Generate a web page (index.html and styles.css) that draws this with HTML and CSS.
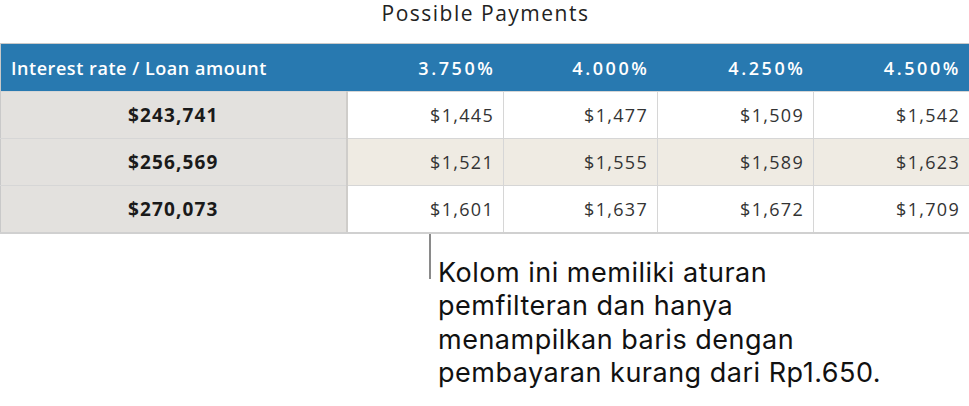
FILE: index.html
```
<!DOCTYPE html>
<html>
<head>
<meta charset="utf-8">
<link rel="stylesheet" href="styles.css">
</head>
<body>
<div class="page">
  <div class="title">Possible Payments</div>
  <table class="grid">
    <colgroup>
      <col class="c1"><col class="c2"><col class="c3"><col class="c4"><col class="c5">
    </colgroup>
    <thead>
      <tr>
        <th class="label">Interest rate / Loan amount</th>
        <th>3.750%</th>
        <th>4.000%</th>
        <th>4.250%</th>
        <th>4.500%</th>
      </tr>
    </thead>
    <tbody>
      <tr>
        <td class="amount">$243,741</td>
        <td>$1,445</td><td>$1,477</td><td>$1,509</td><td>$1,542</td>
      </tr>
      <tr class="alt">
        <td class="amount">$256,569</td>
        <td>$1,521</td><td>$1,555</td><td>$1,589</td><td>$1,623</td>
      </tr>
      <tr>
        <td class="amount">$270,073</td>
        <td>$1,601</td><td>$1,637</td><td>$1,672</td><td>$1,709</td>
      </tr>
    </tbody>
  </table>
  <div class="callout">
    <div class="leader"></div>
    <p class="note">Kolom ini memiliki aturan<br>pemfilteran dan hanya<br>menampilkan baris dengan<br>pembayaran kurang dari Rp1.650.</p>
  </div>
</div>
</body>
</html>
```
FILE: styles.css
```
html, body {
  margin: 0;
  padding: 0;
  background: #ffffff;
}
.page {
  width: 969px;
  height: 406px;
  overflow: hidden;
}
.title {
  height: 43px;
  line-height: 27px;
  text-align: center;
  font-family: "Open Sans", "Lato", sans-serif;
  font-size: 21px;
  letter-spacing: 1.5px;
  color: #222;
  padding-left: 2px;
}
.grid {
  border-collapse: collapse;
  table-layout: fixed;
  width: 969px;
  font-family: "Open Sans", "Lato", sans-serif;
  font-size: 18px;
  letter-spacing: 1.3px;
  color: #333333;
}
.c1 { width: 346px; }
.c2 { width: 157px; }
.c3 { width: 154px; }
.c4 { width: 156px; }
.c5 { width: 156px; }
.grid th {
  background: #2879b0;
  color: #ffffff;
  font-weight: 600;
  text-align: right;
  height: 48px;
  padding: 0 8px 0 0;
  letter-spacing: 2.6px;
  border-top: 1px solid #c9c9c9;
  border-right: none;
  box-sizing: border-box;
}
.grid th.label {
  text-align: left;
  padding-left: 10px;
  letter-spacing: 0.55px;
  border-left: 1px solid #c9c9c9;
}
.grid th:last-child {
  border-right: 1px solid #c9c9c9;
}
.grid td {
  height: 47px;
  padding: 0 9px 0 0;
  text-align: right;
  border: 1px solid #d6d6d6;
  box-sizing: border-box;
}
.grid td.amount {
  background: #e3e1de;
  text-align: center;
  font-weight: 700;
  font-size: 19px;
  letter-spacing: 1.1px;
  color: #1a1a1a;
  padding: 0;
  border-right: 2px solid #cfcdca;
  border-left: 1px solid #c9c9c9;
}
.grid tr.alt td {
  background: #efebe3;
}
.grid tr.alt td.amount {
  background: #e3e1de;
}
.grid tbody tr:last-child td {
  border-bottom: 2px solid #d0d0d0;
}
.grid td:last-child {
  border-right: 1px solid #c9c9c9;
}
.callout {
  display: flex;
  margin-left: 429px;
}
.leader {
  width: 2px;
  height: 45px;
  background: #8a8a8a;
  flex: none;
}
.note {
  margin: 22px 0 0 7px;
  font-family: "Inter", "Noto Sans", sans-serif;
  font-size: 27px;
  line-height: 33.5px;
  letter-spacing: 0.5px;
  color: #111;
}
```
